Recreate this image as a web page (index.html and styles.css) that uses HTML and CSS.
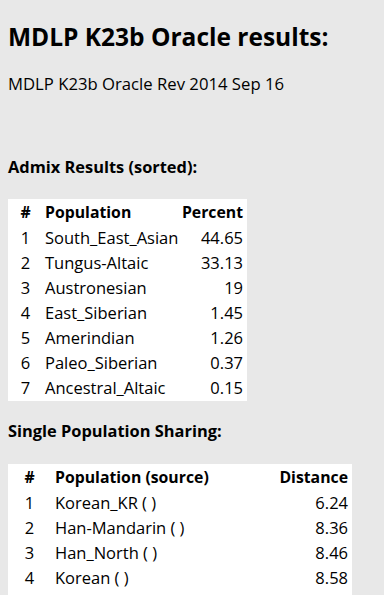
FILE: index.html
```html
<!DOCTYPE html>
<html>
<head>
<meta charset="utf-8">
<link rel="stylesheet" href="styles.css">
</head>
<body>
<h1 class="title">MDLP K23b Oracle results:</h1>
<p class="subtitle">MDLP K23b Oracle Rev 2014 Sep 16</p>

<h3 class="section admix-head">Admix Results (sorted):</h3>
<div class="table-box admix-box">
<table class="results admix">
  <thead>
    <tr><th class="num">#</th><th class="pop">Population</th><th class="val">Percent</th></tr>
  </thead>
  <tbody>
    <tr><td class="num">1</td><td class="pop">South_East_Asian</td><td class="val">44.65</td></tr>
    <tr><td class="num">2</td><td class="pop">Tungus-Altaic</td><td class="val">33.13</td></tr>
    <tr><td class="num">3</td><td class="pop">Austronesian</td><td class="val">19</td></tr>
    <tr><td class="num">4</td><td class="pop">East_Siberian</td><td class="val">1.45</td></tr>
    <tr><td class="num">5</td><td class="pop">Amerindian</td><td class="val">1.26</td></tr>
    <tr><td class="num">6</td><td class="pop">Paleo_Siberian</td><td class="val">0.37</td></tr>
    <tr><td class="num">7</td><td class="pop">Ancestral_Altaic</td><td class="val">0.15</td></tr>
  </tbody>
</table>
</div>

<h3 class="section sharing-head">Single Population Sharing:</h3>
<div class="table-box sharing-box">
<table class="results sharing">
  <thead>
    <tr><th class="num">#</th><th class="pop">Population (source)</th><th class="val">Distance</th></tr>
  </thead>
  <tbody>
    <tr><td class="num">1</td><td class="pop">Korean_KR ( )</td><td class="val">6.24</td></tr>
    <tr><td class="num">2</td><td class="pop">Han-Mandarin ( )</td><td class="val">8.36</td></tr>
    <tr><td class="num">3</td><td class="pop">Han_North ( )</td><td class="val">8.46</td></tr>
    <tr><td class="num">4</td><td class="pop">Korean ( )</td><td class="val">8.58</td></tr>
  </tbody>
</table>
</div>
</body>
</html>
```

FILE: styles.css
```css
html, body {
  margin: 0;
  padding: 0;
}
body {
  background: #e8e8e8;
  color: #000;
  font-family: "Open Sans", "Noto Sans", sans-serif;
  font-size: 16px;
  padding: 0 8px;
}
.title {
  font-size: 24.5px;
  font-weight: 700;
  line-height: 30px;
  margin: 22px 0 0;
}
.subtitle {
  font-size: 16.7px;
  line-height: 22px;
  margin: 21px 0 0;
}
.section {
  font-size: 16.4px;
  font-weight: 700;
  line-height: 20px;
  margin: 0;
}
.admix-head {
  margin-top: 62px;
}
.sharing-head {
  margin-top: 20px;
}
.table-box {
  background: #fff;
  display: flex;
}
.admix-box {
  margin-top: 22px;
  width: 239px;
  padding: 1px 0 1px;
}
.sharing-box {
  margin-top: 23px;
  width: 344px;
  padding: 1px 0 12px;
}
.results {
  border-collapse: collapse;
  border-spacing: 0;
  width: 100%;
}
.results tr {
  height: 25px;
}
.results th,
.results td {
  padding: 0;
  line-height: 25px;
  white-space: nowrap;
}
.results th {
  font-weight: 700;
  font-size: 15.8px;
}
.results td {
  font-size: 16.5px;
}
.results .num {
  text-align: center;
}
.results .pop {
  text-align: left;
}
.results .val {
  text-align: right;
  padding-right: 4px;
}
.admix .num { width: 35px; }
.admix .pop { padding-left: 2px; }
.sharing .num { width: 43px; }
.sharing .pop { padding-left: 4px; }
```
